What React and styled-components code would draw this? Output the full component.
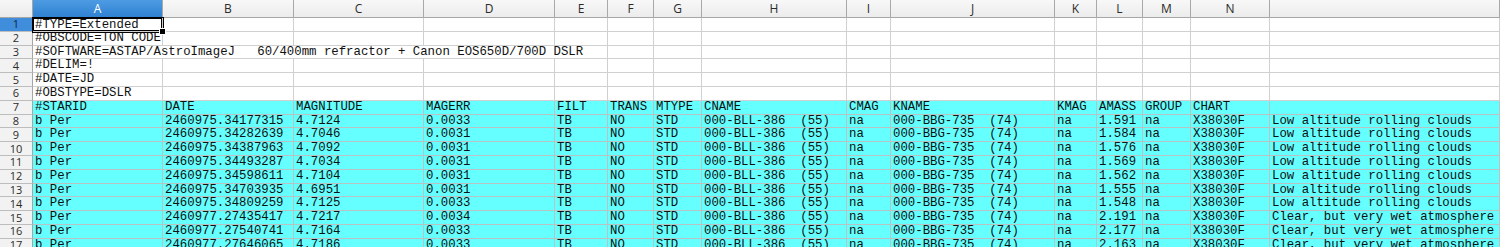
import React from "react";
import styled, { createGlobalStyle } from "styled-components";

const GlobalStyle = createGlobalStyle`
  html, body {
    margin: 0;
    padding: 0;
    background: #ffffff;
    overflow: hidden;
  }
`;

const COLS = ["A", "B", "C", "D", "E", "F", "G", "H", "I", "J", "K", "L", "M", "N", ""];
const WIDTHS = "33px 130px 131px 130px 131px 53px 46px 48px 145px 44px 164px 42px 46px 48px 79px 1fr";

const Sheet = styled.div`
  display: grid;
  grid-template-columns: ${WIDTHS};
  grid-template-rows: 18px;
  grid-auto-rows: 13.8px;
  width: 1500px;
`;

const Corner = styled.div`
  background: linear-gradient(#f7f7f7, #ebebeb);
  border-right: 1px solid #a6a6a6;
  border-bottom: 1px solid #a6a6a6;
  box-sizing: border-box;
`;

const ColHeader = styled.div`
  box-sizing: border-box;
  display: flex;
  align-items: center;
  justify-content: center;
  font-family: "Open Sans", "DejaVu Sans", sans-serif;
  font-size: 12px;
  color: ${(p) => (p.$active ? "#ffffff" : "#2b2b2b")};
  background: ${(p) =>
    p.$active
      ? "linear-gradient(#4d9be2, #2f82d2)"
      : "linear-gradient(#f8f8f8, #ececec)"};
  border-right: 1px solid #a9a9a9;
  border-bottom: 1px solid #a6a6a6;
`;

const RowHeader = styled.div`
  box-sizing: border-box;
  display: flex;
  align-items: center;
  justify-content: center;
  font-family: "Open Sans", "DejaVu Sans", sans-serif;
  font-size: 11px;
  line-height: 12px;
  color: ${(p) => (p.$active ? "#10244a" : "#2b2b2b")};
  background: ${(p) => (p.$active ? "#3f8ddb" : "#f2f2f2")};
  border-right: 1px solid #a6a6a6;
  border-bottom: 1px solid #bdbdbd;
`;

const Cell = styled.div`
  position: relative;
  box-sizing: border-box;
  grid-column: span ${(p) => p.$span || 1};
  padding: 0 2px;
  font-family: "Liberation Mono", "Courier New", monospace;
  font-size: 12.35px;
  line-height: 12.8px;
  color: #111;
  white-space: pre;
  overflow: hidden;
  background: ${(p) => (p.$fill ? "#66ffff" : "#ffffff")};
  border-right: 1px solid ${(p) => (p.$fill ? "#b8c4c4" : "#d0d0d0")};
  border-bottom: 1px solid ${(p) => (p.$fill ? "#b8c4c4" : "#d0d0d0")};
  ${(p) =>
    p.$selected &&
    `
    overflow: visible;
    padding-top: 1px;
    box-shadow: 0 0 0 1px #000, inset 0 0 0 1px #000;
    z-index: 2;
  `}
`;

const Handle = styled.span`
  position: absolute;
  right: -4px;
  bottom: -4px;
  width: 5px;
  height: 5px;
  background: #000;
  border: 1px solid #fff;
`;

const meta = [
  [["#TYPE=Extended", 1]],
  [["#OBSCODE=TON CODE", 1]],
  [["#SOFTWARE=ASTAP/AstroImageJ   60/400mm refractor + Canon EOS650D/700D DSLR", 5]],
  [["#DELIM=!", 1]],
  [["#DATE=JD", 1]],
  [["#OBSTYPE=DSLR", 1]],
];

const heading = [
  "#STARID", "DATE", "MAGNITUDE", "MAGERR", "FILT", "TRANS", "MTYPE",
  "CNAME", "CMAG", "KNAME", "KMAG", "AMASS", "GROUP", "CHART", "",
];

const obs = [
  ["2460975.34177315", "4.7124", "0.0033", "1.591", "Low altitude rolling clouds"],
  ["2460975.34282639", "4.7046", "0.0031", "1.584", "Low altitude rolling clouds"],
  ["2460975.34387963", "4.7092", "0.0031", "1.576", "Low altitude rolling clouds"],
  ["2460975.34493287", "4.7034", "0.0031", "1.569", "Low altitude rolling clouds"],
  ["2460975.34598611", "4.7104", "0.0031", "1.562", "Low altitude rolling clouds"],
  ["2460975.34703935", "4.6951", "0.0031", "1.555", "Low altitude rolling clouds"],
  ["2460975.34809259", "4.7125", "0.0033", "1.548", "Low altitude rolling clouds"],
  ["2460977.27435417", "4.7217", "0.0034", "2.191", "Clear, but very wet atmosphere"],
  ["2460977.27540741", "4.7164", "0.0033", "2.177", "Clear, but very wet atmosphere"],
  ["2460977.27646065", "4.7186", "0.0033", "2.163", "Clear, but very wet atmosphere"],
];

const obsRow = ([date, mag, err, amass, note]) => [
  "b Per", date, mag, err, "TB", "NO", "STD",
  "000-BLL-386  (55)", "na", "000-BBG-735  (74)", "na", amass, "na", "X38030F", note,
];

export default function App() {
  let rowNum = 0;
  const rows = [];

  meta.forEach((parts) => {
    rowNum += 1;
    const r = rowNum;
    rows.push(<RowHeader key={`h${r}`} $active={r === 1}>{r}</RowHeader>);
    let used = 0;
    parts.forEach(([text, span], i) => {
      used += span;
      const sel = r === 1 && i === 0;
      rows.push(
        <Cell key={`${r}-${i}`} $span={span} $selected={sel}>
          {text}
          {sel && <Handle />}
        </Cell>
      );
    });
    for (let c = used; c < COLS.length; c++) {
      rows.push(<Cell key={`${r}-e${c}`} />);
    }
  });

  [heading, ...obs.map(obsRow)].forEach((values) => {
    rowNum += 1;
    const r = rowNum;
    rows.push(<RowHeader key={`h${r}`}>{r}</RowHeader>);
    values.forEach((v, c) => {
      rows.push(<Cell key={`${r}-${c}`} $fill>{v}</Cell>);
    });
  });

  return (
    <>
      <GlobalStyle />
      <Sheet>
        <Corner />
        {COLS.map((c, i) => (
          <ColHeader key={`c${i}`} $active={c === "A"}>{c}</ColHeader>
        ))}
        {rows}
      </Sheet>
    </>
  );
}
